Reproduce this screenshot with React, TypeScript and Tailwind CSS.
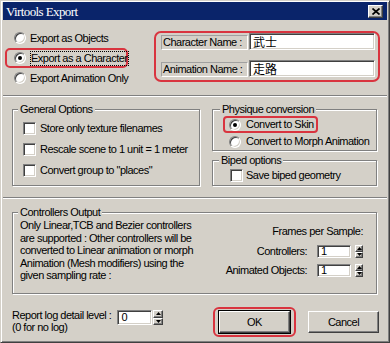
import React from "react";

// Win2000 style bevels
const SUNKEN =
	"border border-t-[#808080] border-l-[#808080] border-r-white border-b-white shadow-[inset_1px_1px_0_#404040,inset_-1px_-1px_0_#d4d0c8]";
const RAISED =
	"border border-t-white border-l-white border-r-[#404040] border-b-[#404040] shadow-[inset_-1px_-1px_0_#808080] bg-[#d4d0c8]";
const GROUP =
	"border border-[#808080] shadow-[inset_1px_1px_0_#fff,1px_1px_0_#fff]";
const LEGEND = "bg-[#d4d0c8] px-[2px] leading-[13px] whitespace-nowrap";
const RED = "border-[#d9343f]";

const Radio = ({ checked }: { checked?: boolean }) => (
	<span
		className={`flex h-[12px] w-[12px] shrink-0 items-center justify-center rounded-full bg-white ${SUNKEN}`}
	>
		{checked && <span className="h-[4px] w-[4px] rounded-full bg-black" />}
	</span>
);

const Checkbox = () => (
	<span className={`h-[13px] w-[13px] shrink-0 bg-white ${SUNKEN}`} />
);

const Arrow = ({ down }: { down?: boolean }) => (
	<svg width="5" height="3" viewBox="0 0 5 3">
		<path d={down ? "M0 0L5 0L2.5 3Z" : "M0 3L5 3L2.5 0Z"} fill="#000" />
	</svg>
);

const Spinner = ({ w, h }: { w: string; h: string }) => (
	<div className={`flex flex-col ${w} ${h}`}>
		<div className={`flex flex-1 items-center justify-center ${RAISED}`}>
			<Arrow />
		</div>
		<div className={`flex flex-1 items-center justify-center ${RAISED}`}>
			<Arrow down />
		</div>
	</div>
);

const radios = [
	{ label: "Export as Objects", checked: false },
	{ label: "Export as a Character", checked: true },
	{ label: "Export Animation Only", checked: false },
];

const names = [
	{ label: "Character Name :", value: "武士" },
	{ label: "Animation Name :", value: "走路" },
];

export default function App() {
	return (
		<div className="flex h-[343px] w-[390px] flex-col border border-t-[#d4d0c8] border-l-[#d4d0c8] border-r-[#404040] border-b-[#404040] bg-[#d4d0c8] px-[2px] pt-[1px] font-['Liberation_Sans',sans-serif] text-[11px] leading-none tracking-[-0.5px] text-black shadow-[inset_1px_1px_0_#fff,inset_-1px_-1px_0_#808080]">
			{/* title bar */}
			<div className="flex h-[18px] shrink-0 items-center bg-[#0a246a] pl-[3px] pr-[4px]">
				<span className="font-['Liberation_Serif',serif] text-[13px] tracking-[-0.6px] text-white">
					Virtools Export
				</span>
				<div
					className={`ml-auto flex h-[13px] w-[15px] items-center justify-center ${RAISED}`}
				>
					<svg width="8" height="7" viewBox="0 0 8 7">
						<path d="M0.5 0.5L7.5 6.5M7.5 0.5L0.5 6.5" stroke="#000" strokeWidth="1.7" />
					</svg>
				</div>
			</div>

			{/* export mode + names */}
			<div className="flex h-[75px] shrink-0">
				<div className="ml-[2px] flex flex-col pt-[8px]">
					{radios.map((r) => (
						<div
							key={r.label}
							className={`flex h-[20px] w-[123px] items-center gap-[4px] border-2 pl-[7px] ${
								r.checked ? `rounded-[5px] ${RED}` : "border-transparent"
							}`}
						>
							<Radio checked={r.checked} />
							{r.checked ? (
								<span className="whitespace-nowrap border border-dotted border-black py-[1px]">
									{r.label}
								</span>
							) : (
								<span className="whitespace-nowrap">{r.label}</span>
							)}
						</div>
					))}
				</div>
				<div
					className={`ml-auto mr-[7px] mt-[11px] flex h-[51px] w-[226px] flex-col gap-[10px] rounded-[7px] border-2 pb-[3px] pl-[5px] pr-[3px] ${RED}`}
				>
					{names.map((n) => (
						<div key={n.label} className="flex h-[17px] items-end gap-[1px]">
							<div className="flex h-[15px] w-[87px] items-center whitespace-nowrap border border-t-[#a0a0a0] border-l-[#a0a0a0] border-r-white border-b-white pl-[1px]">
								{n.label}
							</div>
							<div
								className={`flex h-[17px] flex-1 items-center bg-white pl-[3px] font-['Noto_Sans_CJK_TC',sans-serif] text-[12px] tracking-normal ${SUNKEN}`}
							>
								{n.value}
							</div>
						</div>
					))}
				</div>
			</div>

			<div className="h-[2px] shrink-0 border-t border-b border-t-[#808080] border-b-white" />

			{/* options */}
			<div className="flex h-[100px] shrink-0 pl-[9px] pt-[6px]">
				<fieldset className={`h-[83px] w-[188px] ${GROUP}`}>
					<legend className={`ml-[5px] ${LEGEND}`}>General Options</legend>
					<div className="flex flex-col pl-[10px] pt-[2px]">
						{[
							"Store only texture filenames",
							"Rescale scene to 1 unit = 1 meter",
							'Convert group to "places"',
						].map((t) => (
							<div key={t} className="flex h-[21px] items-center gap-[4px]">
								<Checkbox />
								<span className="whitespace-nowrap">{t}</span>
							</div>
						))}
					</div>
				</fieldset>

				<div className="ml-[12px] flex w-[165px] flex-col">
					<fieldset className={`h-[48px] ${GROUP}`}>
						<legend className={`ml-[7px] ${LEGEND}`}>Physique conversion</legend>
						<div className="flex flex-col pl-[10px]">
							<div
								className={`flex h-[17px] w-[95px] items-center gap-[5px] rounded-[4px] border-2 pl-[4px] ${RED}`}
							>
								<Radio checked />
								<span className="whitespace-nowrap">Convert to Skin</span>
							</div>
							<div className="flex h-[17px] items-center gap-[5px] border-2 border-transparent pl-[4px]">
								<Radio />
								<span className="whitespace-nowrap">Convert to Morph Animation</span>
							</div>
						</div>
					</fieldset>
					<fieldset className={`mt-[3px] h-[32px] ${GROUP}`}>
						<legend className={`ml-[6px] ${LEGEND}`}>Biped options</legend>
						<div className="flex h-[16px] items-center gap-[3px] pl-[17px]">
							<Checkbox />
							<span className="whitespace-nowrap">Save biped geometry</span>
						</div>
					</fieldset>
				</div>
			</div>

			<div className="h-[2px] shrink-0 border-t border-b border-t-[#808080] border-b-white" />

			{/* controllers */}
			<fieldset className={`ml-[9px] mt-[7px] h-[88px] w-[365px] shrink-0 ${GROUP}`}>
				<legend className={`ml-[5px] ${LEGEND}`}>Controllers Output</legend>
				<div className="flex">
					<p className="whitespace-nowrap pl-[7px] leading-[12.5px]">
						Only Linear,TCB and Bezier controllers
						<br />
						are supported : Other controllers will be
						<br />
						converted to Linear animation or morph
						<br />
						Animation (Mesh modifiers) using the
						<br />
						given sampling rate :
					</p>
					<div className="ml-auto flex flex-col items-end pr-[13px] pt-[6px]">
						<span className="whitespace-nowrap leading-[13px]">Frames per Sample:</span>
						{["Controllers:", "Animated Objects:"].map((l, i) => (
							<div
								key={l}
								className={`flex h-[13px] items-center ${i === 0 ? "mt-[7px]" : "mt-[6px]"}`}
							>
								<span className="whitespace-nowrap">{l}</span>
								<div
									className={`ml-[10px] flex h-[13px] w-[34px] items-center bg-white pl-[3px] ${SUNKEN}`}
								>
									1
								</div>
								<div className="ml-[4px]">
									<Spinner w="w-[8px]" h="h-[13px]" />
								</div>
							</div>
						))}
					</div>
				</div>
			</fieldset>

			{/* bottom row */}
			<div className="flex flex-1 items-start pl-[9px] pr-[8px]">
				<div className="mt-[15px] whitespace-nowrap leading-[12px]">
					Report log detail level :
					<br />
					(0 for no log)
				</div>
				<div className="ml-[6px] mt-[16px] flex gap-[1px]">
					<div
						className={`flex h-[15px] w-[35px] items-center bg-white pl-[3px] ${SUNKEN}`}
					>
						0
					</div>
					<Spinner w="w-[10px]" h="h-[15px]" />
				</div>
				<div className={`ml-auto mt-[13px] rounded-[6px] border-2 px-[3px] py-[1px] ${RED}`}>
					<div className="border border-black">
						<div
							className={`flex h-[22px] w-[71px] items-center justify-center ${RAISED}`}
						>
							OK
						</div>
					</div>
				</div>
				<div
					className={`ml-[12px] mt-[17px] flex h-[22px] w-[71px] items-center justify-center ${RAISED}`}
				>
					Cancel
				</div>
			</div>
		</div>
	);
}
